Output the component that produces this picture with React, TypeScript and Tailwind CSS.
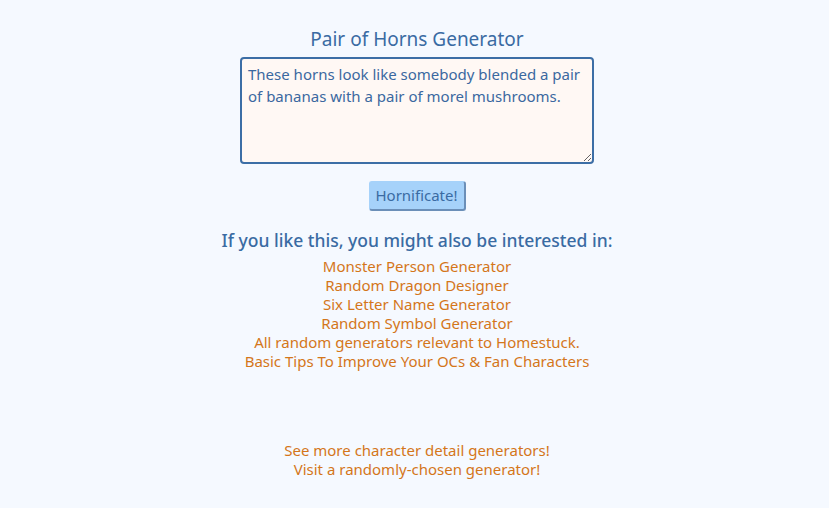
export default function App() {
  const links = [
    "Monster Person Generator",
    "Random Dragon Designer",
    "Six Letter Name Generator",
    "Random Symbol Generator",
    "All random generators relevant to Homestuck.",
    "Basic Tips To Improve Your OCs & Fan Characters",
  ];
  return (
    <div
      className="min-h-[508px] w-full bg-[#f5f9ff] pl-[5px] flex flex-col items-center text-center"
      style={{ fontFamily: '"Trebuchet MS", "Noto Sans", sans-serif' }}
    >
      <h1 className="mt-[27px] text-[19px] leading-[24px] text-[#3a6ba3]">Pair of Horns Generator</h1>
      <textarea
        className="mt-[6px] w-[354px] h-[107px] border-2 border-[#3c6ea6] rounded-[4px] bg-[#fff8f4] text-[#3b68a0] text-[15px] leading-[22px] px-[6px] py-[4px] text-left outline-none"
        defaultValue="These horns look like somebody blended a pair of bananas with a pair of morel mushrooms."
      />
      <button className="mt-[17px] w-[97px] h-[30px] bg-[#a6d2fa] text-[#3a6ba3] text-[15px] rounded-[3px] border border-[#a6d2fa] border-r-2 border-b-2 border-r-[#6b8fb8] border-b-[#6b8fb8]">
        Hornificate!
      </button>
      <div className="mt-[18px] text-[17.5px] leading-[22px] font-medium text-[#3a6ba3]">
        If you like this, you might also be interested in:
      </div>
      <div className="mt-[6px] flex flex-col items-center">
        {links.map((l) => (
          <a key={l} className="text-[15px] leading-[19px] text-[#d4761a]">
            {l}
          </a>
        ))}
      </div>
      <div className="mt-[70px] flex flex-col items-center">
        <a className="text-[15px] leading-[19px] text-[#d4761a]">See more character detail generators!</a>
        <a className="text-[15px] leading-[19px] text-[#d4761a]">Visit a randomly-chosen generator!</a>
      </div>
    </div>
  );
}
